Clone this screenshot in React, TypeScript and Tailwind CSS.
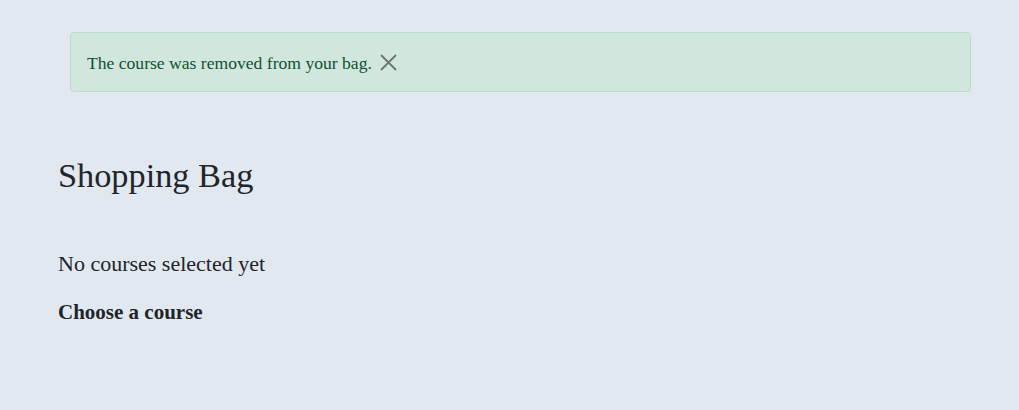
export default function App() {
  return (
    <div className="min-h-screen bg-[#e2e8f0] font-['Liberation_Serif',serif] text-[#212529]">
      <div className="pt-[32px] pl-[70px] pr-[48px]">
        <div className="flex items-center h-[60px] px-4 rounded border border-[#badbcc] bg-[#d1e7dd] text-[#0f5132] text-[17.6px]">
          <span className="mt-[3px]">The course was removed from your bag.</span>
          <button className="ml-[8px] text-[#6b7770]">
            <svg width="17" height="17" viewBox="0 0 17 17" fill="none" stroke="currentColor" strokeWidth="1.8">
              <path d="M1 1 16 16M16 1 1 16" />
            </svg>
          </button>
        </div>
      </div>

      <div className="pl-[58px]">
        <h1 className="mt-[62px] text-[34.3px] leading-tight">Shopping Bag</h1>
        <p className="mt-[50px] text-[22px]">No courses selected yet</p>
        <p className="mt-[17px] text-[21px] font-bold">Choose a course</p>
      </div>
    </div>
  );
}
